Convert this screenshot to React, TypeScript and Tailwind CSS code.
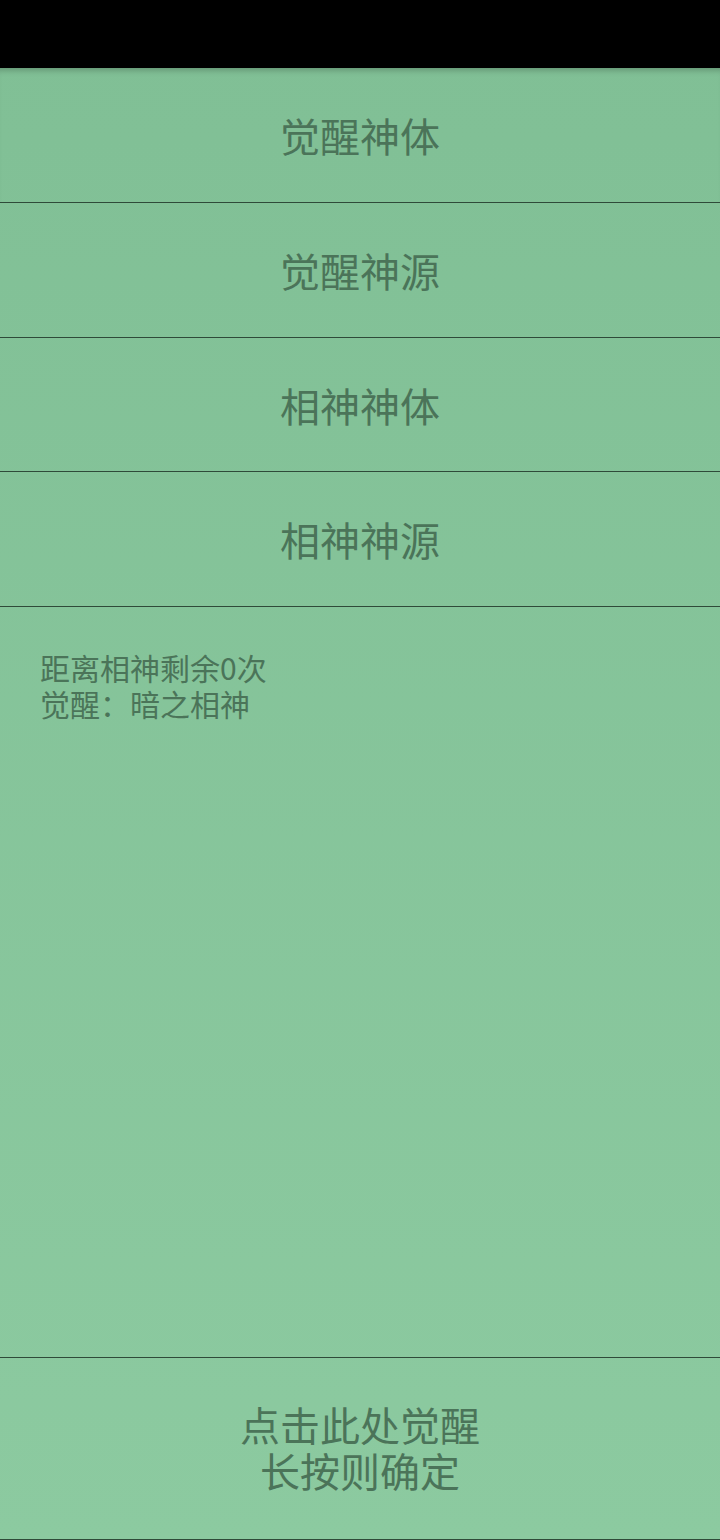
const ROWS = ["觉醒神体", "觉醒神源", "相神神体", "相神神源"];

const cjk = { fontFamily: '"Noto Sans CJK SC", "Noto Sans", sans-serif' };

export default function App() {
  return (
    <div
      className="flex h-[1540px] w-[720px] flex-col bg-gradient-to-b from-[#80bf95] to-[#8ccaa0] text-[#4b7459]"
      style={cjk}
    >
      <div className="h-[68px] shrink-0 bg-black" />

      {ROWS.map((label, i) => (
        <div
          key={label}
          className={
            i === 0
              ? "flex h-[135px] shrink-0 items-center justify-center border-b border-[#2f4a39] text-[40px] leading-none shadow-[inset_0_7px_6px_-5px_rgba(0,0,0,0.25)]"
              : i === 2
                ? "flex h-[134px] shrink-0 items-center justify-center border-b border-[#2f4a39] text-[40px] leading-none"
                : "flex h-[135px] shrink-0 items-center justify-center border-b border-[#2f4a39] text-[40px] leading-none"
          }
        >
          {label}
        </div>
      ))}

      <div className="flex-1 pl-[40px] pt-[42px] text-[30px] leading-[36px]">
        <div>距离相神剩余0次</div>
        <div>觉醒：暗之相神</div>
      </div>

      <div className="flex h-[183px] shrink-0 flex-col items-center justify-center border-y border-[#2f4a39] pb-[3px] text-[40px] leading-[46px]">
        <div>点击此处觉醒</div>
        <div>长按则确定</div>
      </div>
    </div>
  );
}
